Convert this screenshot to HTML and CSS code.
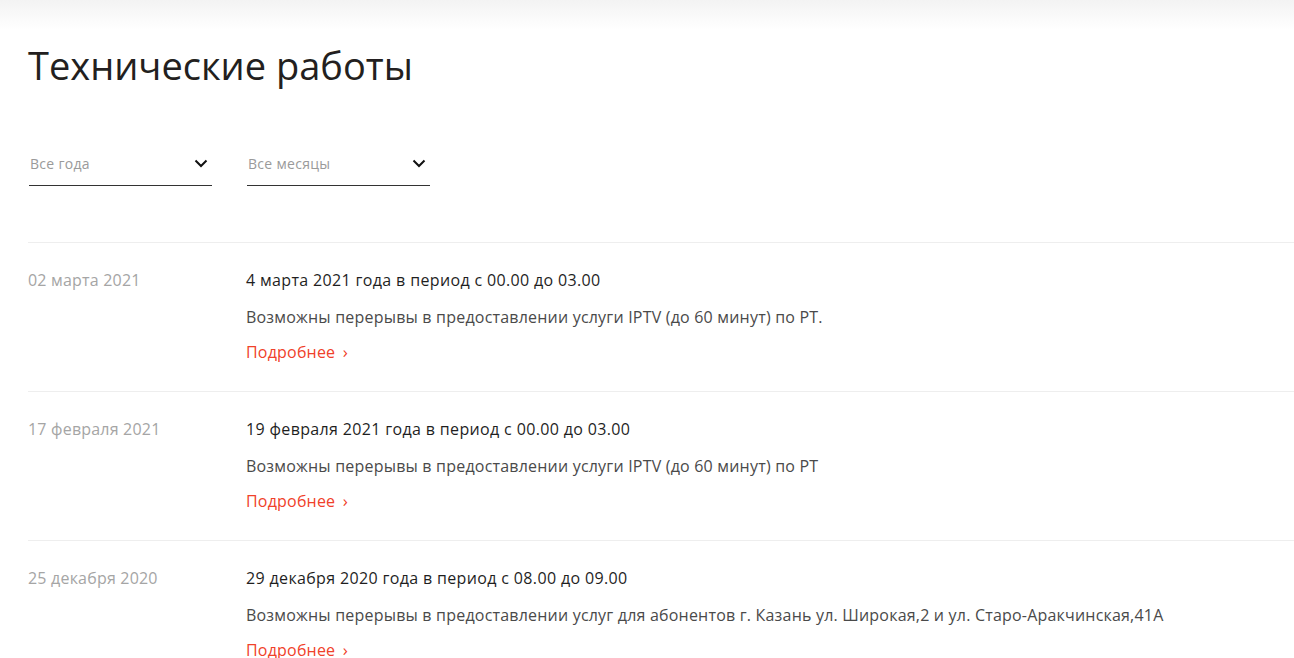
FILE: index.html
```html
<!DOCTYPE html>
<html lang="ru">
<head>
<meta charset="utf-8">
<link rel="stylesheet" href="styles.css">
</head>
<body>
<div class="topbar"></div>
<main class="page">
  <h1 class="title">Технические работы</h1>
  <div class="filters">
    <div class="select"><span>Все года</span>
      <svg width="14" height="9" viewBox="0 0 14 9"><path d="M1.5 1.5 L7 7 L12.5 1.5" fill="none" stroke="#111" stroke-width="2"/></svg>
    </div>
    <div class="select"><span>Все месяцы</span>
      <svg width="14" height="9" viewBox="0 0 14 9"><path d="M1.5 1.5 L7 7 L12.5 1.5" fill="none" stroke="#111" stroke-width="2"/></svg>
    </div>
  </div>
  <ul class="list">
    <li class="item">
      <div class="date">02 марта 2021</div>
      <div class="body">
        <div class="head">4 марта 2021 года в период с 00.00 до 03.00</div>
        <div class="desc">Возможны перерывы в предоставлении услуги IPTV (до 60 минут) по РТ.</div>
        <a class="more" href="#">Подробнее <span class="arr">›</span></a>
      </div>
    </li>
    <li class="item">
      <div class="date">17 февраля 2021</div>
      <div class="body">
        <div class="head">19 февраля 2021 года в период с 00.00 до 03.00</div>
        <div class="desc">Возможны перерывы в предоставлении услуги IPTV (до 60 минут) по РТ</div>
        <a class="more" href="#">Подробнее <span class="arr">›</span></a>
      </div>
    </li>
    <li class="item">
      <div class="date">25 декабря 2020</div>
      <div class="body">
        <div class="head">29 декабря 2020 года в период с 08.00 до 09.00</div>
        <div class="desc">Возможны перерывы в предоставлении услуг для абонентов г. Казань ул. Широкая,2 и ул. Старо-Аракчинская,41А</div>
        <a class="more" href="#">Подробнее <span class="arr">›</span></a>
      </div>
    </li>
  </ul>
</main>
</body>
</html>
```
FILE: styles.css
```css
html, body { margin: 0; padding: 0; background: #fff; }
body { font-family: "Open Sans", "Noto Sans", sans-serif; color: #222; overflow: hidden; height: 658px; }
.topbar { height: 30px; background: linear-gradient(#f3f3f3, #ffffff); }
.page { padding-left: 28px; }
.title { margin: 10px 0 0; font-size: 38px; font-weight: 400; line-height: 50px; color: #231f20; }
.filters { display: flex; gap: 35px; margin-top: 62px; padding-left: 1px; }
.select { width: 183px; height: 34px; box-sizing: border-box; border-bottom: 1px solid #333; display: flex; align-items: flex-start; justify-content: space-between; padding: 2px 4px 0 1px; font-size: 14px; letter-spacing: 0.3px; color: #9a9a9a; }
.select svg { margin-top: 5px; }
.list { list-style: none; margin: 56px 0 0; padding: 0; }
.item { display: flex; border-top: 1px solid #eee; height: 149px; box-sizing: border-box; padding-top: 26px; }
.date { width: 218px; flex: none; font-size: 16px; letter-spacing: 0.2px; color: #a5a5a5; line-height: 22px; }
.body { font-size: 16px; letter-spacing: 0.2px; line-height: 22px; }
.head { color: #1f1f1f; font-weight: 500; letter-spacing: 0.35px; }
.desc { color: #4a4a4a; margin-top: 15px; }
.more { display: inline-block; margin-top: 13px; color: #f0412a; text-decoration: none; }
.arr { font-size: 17px; margin-left: 3px; }
```
